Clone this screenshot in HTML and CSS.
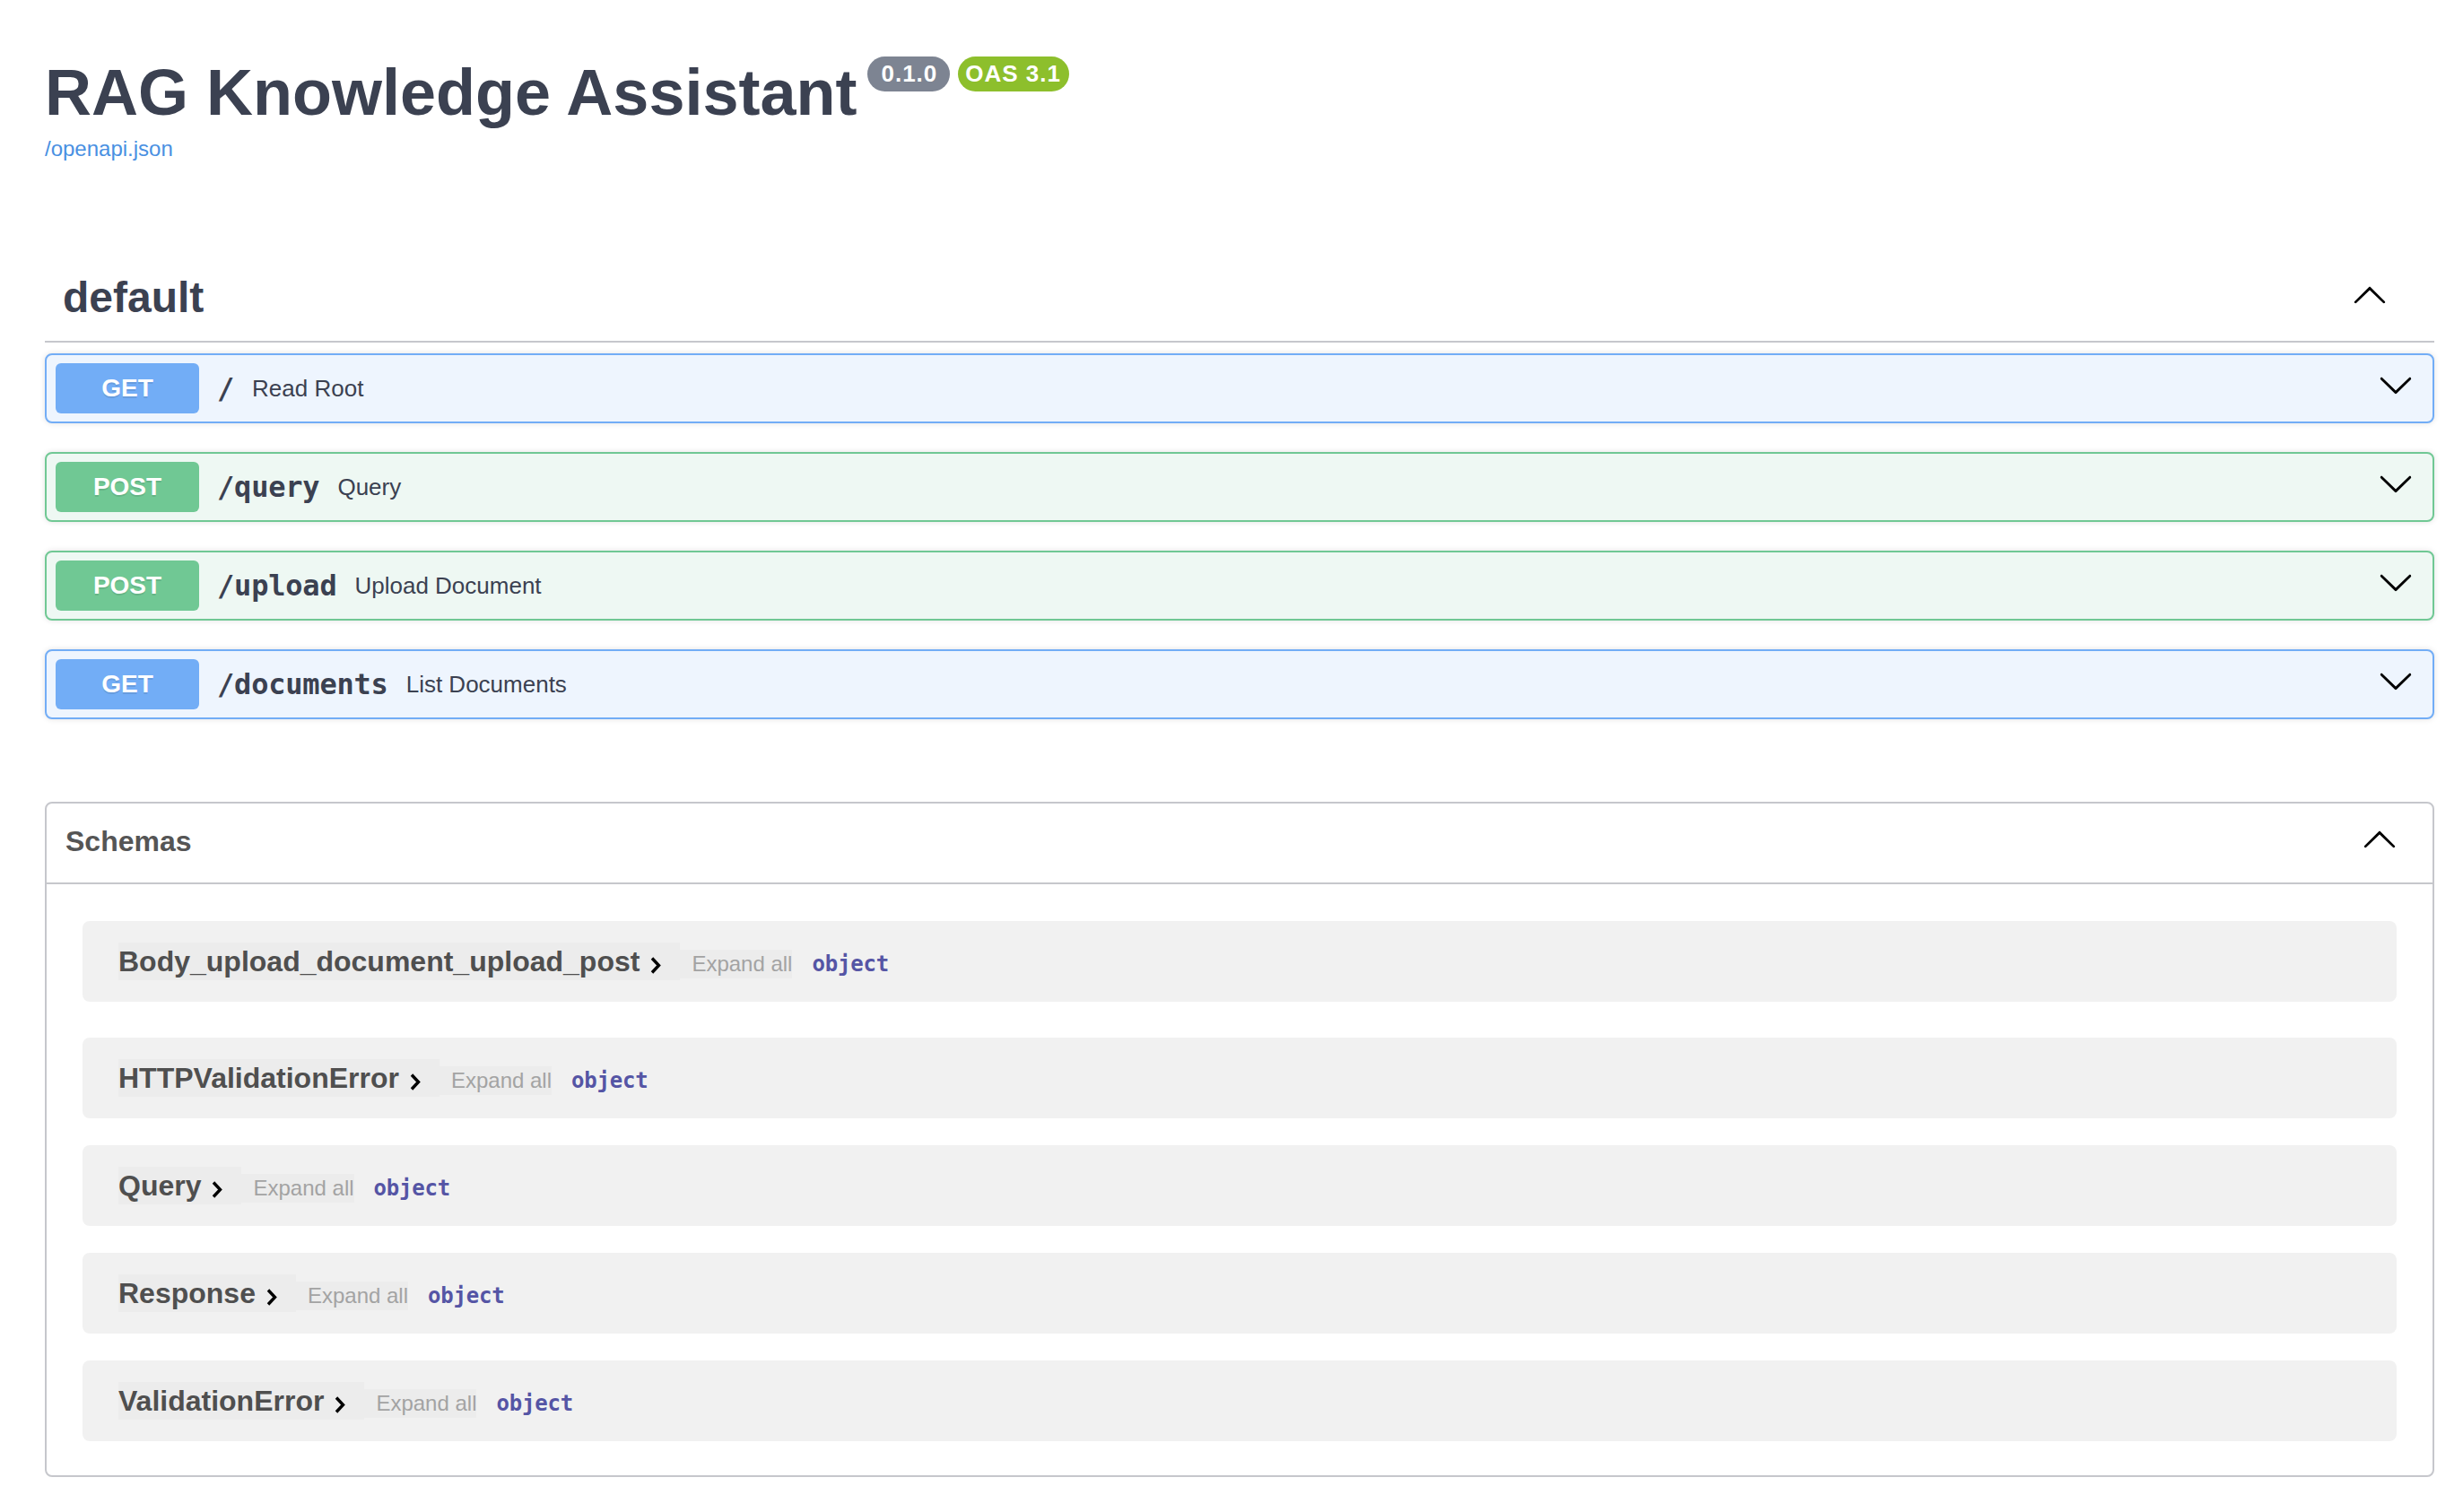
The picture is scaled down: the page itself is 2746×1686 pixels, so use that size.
FILE: index.html
```html
<!DOCTYPE html>
<html lang="en">
<head>
<meta charset="utf-8">
<title>RAG Knowledge Assistant - Swagger UI</title>
<link rel="stylesheet" href="styles.css">
</head>
<body>
<div class="page">
  <header class="info">
    <div class="title-row">
      <h1 class="title">RAG Knowledge Assistant</h1>
      <span class="ver ver-app">0.1.0</span>
      <span class="ver ver-oas">OAS 3.1</span>
    </div>
    <a class="spec-link" href="#">/openapi.json</a>
  </header>

  <section class="tag-section">
    <h3 class="tag">
      <span class="tag-name">default</span>
      <svg class="arrow tag-arrow" width="40" height="40" viewBox="0 0 20 20"><path d="M17.418 14.908c.272.268.709.268.979 0s.271-.701 0-.969l-7.908-7.830c-.27-.268-.707-.268-.979 0l-7.908 7.830c-.27.268-.27.701 0 .969.271.268.709.268.979 0L10 7.767l7.418 7.141z"/></svg>
    </h3>
    <div class="ops">
      <div class="op op-get">
        <span class="method">GET</span>
        <span class="path">/</span>
        <span class="desc">Read Root</span>
        <svg class="arrow op-arrow" width="40" height="40" viewBox="0 0 20 20"><path d="M17.418 6.109c.272-.268.709-.268.979 0s.271.701 0 .969l-7.908 7.83c-.27.268-.707.268-.979 0l-7.908-7.83c-.27-.268-.27-.701 0-.969.271-.268.709-.268.979 0L10 13.25l7.418-7.141z"/></svg>
      </div>
      <div class="op op-post">
        <span class="method">POST</span>
        <span class="path">/query</span>
        <span class="desc">Query</span>
        <svg class="arrow op-arrow" width="40" height="40" viewBox="0 0 20 20"><path d="M17.418 6.109c.272-.268.709-.268.979 0s.271.701 0 .969l-7.908 7.83c-.27.268-.707.268-.979 0l-7.908-7.83c-.27-.268-.27-.701 0-.969.271-.268.709-.268.979 0L10 13.25l7.418-7.141z"/></svg>
      </div>
      <div class="op op-post">
        <span class="method">POST</span>
        <span class="path">/upload</span>
        <span class="desc">Upload Document</span>
        <svg class="arrow op-arrow" width="40" height="40" viewBox="0 0 20 20"><path d="M17.418 6.109c.272-.268.709-.268.979 0s.271.701 0 .969l-7.908 7.83c-.27.268-.707.268-.979 0l-7.908-7.83c-.27-.268-.27-.701 0-.969.271-.268.709-.268.979 0L10 13.25l7.418-7.141z"/></svg>
      </div>
      <div class="op op-get">
        <span class="method">GET</span>
        <span class="path">/documents</span>
        <span class="desc">List Documents</span>
        <svg class="arrow op-arrow" width="40" height="40" viewBox="0 0 20 20"><path d="M17.418 6.109c.272-.268.709-.268.979 0s.271.701 0 .969l-7.908 7.83c-.27.268-.707.268-.979 0l-7.908-7.83c-.27-.268-.27-.701 0-.969.271-.268.709-.268.979 0L10 13.25l7.418-7.141z"/></svg>
      </div>
    </div>
  </section>

  <section class="models">
    <h4 class="models-head">
      <span>Schemas</span>
      <svg class="arrow models-arrow" width="40" height="40" viewBox="0 0 20 20"><path d="M17.418 14.908c.272.268.709.268.979 0s.271-.701 0-.969l-7.908-7.830c-.27-.268-.707-.268-.979 0l-7.908 7.830c-.27.268-.27.701 0 .969.271.268.709.268.979 0L10 7.767l7.418 7.141z"/></svg>
    </h4>
    <div class="models-body">
      <div class="model model-first">
        <span class="model-title">Body_upload_document_upload_post<svg class="chev" width="14" height="22" viewBox="0 0 14 22"><polyline points="3,3.5 10.5,11.5 3,19.5"/></svg></span>
        <span class="expand">Expand all</span>
        <span class="type">object</span>
      </div>
      <div class="model">
        <span class="model-title">HTTPValidationError<svg class="chev" width="14" height="22" viewBox="0 0 14 22"><polyline points="3,3.5 10.5,11.5 3,19.5"/></svg></span>
        <span class="expand">Expand all</span>
        <span class="type">object</span>
      </div>
      <div class="model">
        <span class="model-title">Query<svg class="chev" width="14" height="22" viewBox="0 0 14 22"><polyline points="3,3.5 10.5,11.5 3,19.5"/></svg></span>
        <span class="expand">Expand all</span>
        <span class="type">object</span>
      </div>
      <div class="model">
        <span class="model-title">Response<svg class="chev" width="14" height="22" viewBox="0 0 14 22"><polyline points="3,3.5 10.5,11.5 3,19.5"/></svg></span>
        <span class="expand">Expand all</span>
        <span class="type">object</span>
      </div>
      <div class="model">
        <span class="model-title">ValidationError<svg class="chev" width="14" height="22" viewBox="0 0 14 22"><polyline points="3,3.5 10.5,11.5 3,19.5"/></svg></span>
        <span class="expand">Expand all</span>
        <span class="type">object</span>
      </div>
    </div>
  </section>
</div>
</body>
</html>
```
FILE: styles.css
```css
html, body {
  margin: 0;
  padding: 0;
  background: #ffffff;
}

body {
  font-family: "Liberation Sans", Arial, Helvetica, sans-serif;
  color: #3b4151;
}

.page {
  padding: 60px 32px 0 50px;
}

/* ---------- info header ---------- */
.title-row {
  display: flex;
  align-items: flex-start;
}

.title {
  margin: 0;
  font-size: 72px;
  line-height: 86px;
  font-weight: 700;
  color: #3b4151;
}

.ver {
  margin-top: 3px;
  height: 39px;
  line-height: 39px;
  padding: 0 14px 0 15px;
  border-radius: 40px;
  color: #ffffff;
  font-size: 26px;
  font-weight: 700;
  letter-spacing: 1px;
  white-space: nowrap;
}

.ver-app {
  margin-left: 12px;
  background: #7d8492;
}

.ver-oas {
  margin-left: 9px;
  background: #8dbf2c;
  padding: 0 9px 0 8px;
}

.spec-link {
  display: block;
  margin-top: 2px;
  font-size: 24px;
  line-height: 36px;
  color: #4990e2;
  text-decoration: none;
}

/* ---------- tag section ---------- */
.tag-section {
  margin-top: 98px;
}

.tag {
  margin: 0 0 12px;
  display: flex;
  align-items: center;
  padding: 20px 52px 20px 20px;
  border-bottom: 2px solid #c6c7cc;
  font-size: 48px;
  line-height: 58px;
  font-weight: 700;
  color: #3b4151;
}

.tag-name {
  flex: 1;
  position: relative;
  top: 1px;
}

.arrow {
  fill: #000000;
  flex: none;
}

.tag-arrow {
  margin-bottom: 6px;
}

.ops {
  display: flex;
  flex-direction: column;
  gap: 32px;
}

.op {
  display: flex;
  align-items: center;
  height: 56px;
  padding: 9px 21px 9px 10px;
  border: 2px solid;
  border-radius: 8px;
  box-shadow: 0 0 6px rgba(0, 0, 0, 0.12);
}

.op-get {
  background: #eef5fe;
  border-color: #72adf6;
}

.op-post {
  background: #eef8f3;
  border-color: #70c894;
}

.method {
  width: 160px;
  height: 56px;
  line-height: 56px;
  border-radius: 6px;
  text-align: center;
  color: #ffffff;
  font-size: 28px;
  font-weight: 700;
  text-shadow: 0 2px 0 rgba(0, 0, 0, 0.1);
  flex: none;
}

.op-get .method {
  background: #72adf6;
}

.op-post .method {
  background: #70c894;
}

.path {
  padding: 0 20px;
  font-family: "DejaVu Sans Mono", "Liberation Mono", monospace;
  font-size: 32px;
  font-weight: 700;
  color: #3b4151;
  letter-spacing: -0.2px;
}

.desc {
  flex: 1;
  font-size: 26px;
  color: #3b4151;
}

.op-arrow {
  margin-bottom: 8px;
}

/* ---------- schemas ---------- */
.models {
  margin-top: 92px;
  border: 2px solid #c6c7cc;
  border-radius: 8px;
}

.models-head {
  margin: 0;
  height: 88px;
  display: flex;
  align-items: center;
  justify-content: space-between;
  padding: 0 39px 4px 21px;
  box-sizing: border-box;
  height: 90px;
  border-bottom: 2px solid #c6c7cc;
  font-size: 32px;
  font-weight: 700;
  color: #555555;
}

.models-arrow {
  margin-bottom: 6px;
}

.models-body {
  padding: 41px 40px 38px;
  display: flex;
  flex-direction: column;
  gap: 30px;
}

.model {
  display: flex;
  align-items: baseline;
  padding: 24px 40px;
  background: #f1f1f1;
  border-radius: 8px;
}

.model-first {
  margin-bottom: 10px;
}

.model-title {
  display: inline-flex;
  align-items: baseline;
  line-height: 42px;
  padding-right: 20px;
  font-size: 32px;
  font-weight: 700;
  color: #4f4f4f;
  background: rgba(0, 0, 0, 0.02);
}

.chev {
  margin-left: 11px;
  align-self: center;
  position: relative;
  top: 4px;
  fill: none;
  stroke: #000000;
  stroke-width: 3.4;
}

.expand {
  line-height: 32px;
  padding-left: 13px;
  font-size: 24px;
  color: #a3a3a3;
  background: rgba(0, 0, 0, 0.02);
}

.type {
  margin-left: 22px;
  font-family: "DejaVu Sans Mono", "Liberation Mono", monospace;
  font-size: 24px;
  font-weight: 700;
  color: #5555a5;
  letter-spacing: -0.2px;
}
```
